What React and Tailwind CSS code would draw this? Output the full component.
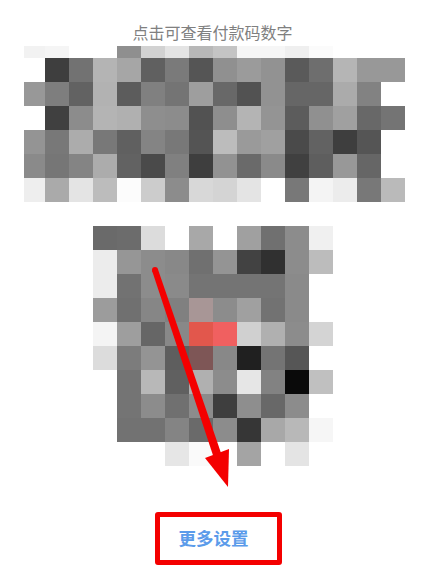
const barcode = [
  ["bg-[#f2f2f2]", "bg-[#f5f5f5]", "bg-white", "bg-white", "bg-[#8f8f8f]", "bg-[#d2d2d2]", "bg-[#e4e4e4]", "bg-[#b8b8b8]", "bg-[#c4c4c4]", "bg-[#f6f6f6]", "bg-[#f6f6f6]", "bg-[#efefef]", "bg-[#fbfbfb]", "bg-white", "bg-white", "bg-white"],
  ["bg-white", "bg-[#3e3e3e]", "bg-[#727272]", "bg-[#b4b4b4]", "bg-[#a6a6a6]", "bg-[#606060]", "bg-[#7a7a7a]", "bg-[#555555]", "bg-[#909090]", "bg-[#9b9b9b]", "bg-[#929292]", "bg-[#5a5a5a]", "bg-[#6e6e6e]", "bg-[#b5b5b5]", "bg-[#989898]", "bg-[#989898]"],
  ["bg-[#989898]", "bg-[#7e7e7e]", "bg-[#626262]", "bg-[#b2b2b2]", "bg-[#5c5c5c]", "bg-[#808080]", "bg-[#747474]", "bg-[#9e9e9e]", "bg-[#686868]", "bg-[#525252]", "bg-[#929292]", "bg-[#666666]", "bg-[#666666]", "bg-[#ababab]", "bg-[#828282]", "bg-white"],
  ["bg-white", "bg-[#404040]", "bg-[#8c8c8c]", "bg-[#b4b4b4]", "bg-[#b0b0b0]", "bg-[#8e8e8e]", "bg-[#8c8c8c]", "bg-[#525252]", "bg-[#8e8e8e]", "bg-[#b4b4b4]", "bg-[#949494]", "bg-[#5c5c5c]", "bg-[#909090]", "bg-[#a0a0a0]", "bg-[#686868]", "bg-[#747474]"],
  ["bg-[#949494]", "bg-[#787878]", "bg-[#acacac]", "bg-[#787878]", "bg-[#606060]", "bg-[#848484]", "bg-[#787878]", "bg-[#545454]", "bg-[#bcbcbc]", "bg-[#9a9a9a]", "bg-[#a0a0a0]", "bg-[#4a4a4a]", "bg-[#626262]", "bg-[#3e3e3e]", "bg-[#555555]", "bg-white"],
  ["bg-[#8a8a8a]", "bg-[#767676]", "bg-[#848484]", "bg-[#acacac]", "bg-[#626262]", "bg-[#4a4a4a]", "bg-[#808080]", "bg-[#3e3e3e]", "bg-[#929292]", "bg-[#6a6a6a]", "bg-[#8a8a8a]", "bg-[#404040]", "bg-[#5e5e5e]", "bg-[#989898]", "bg-[#666666]", "bg-white"],
  ["bg-[#eeeeee]", "bg-[#aaaaaa]", "bg-[#e4e4e4]", "bg-[#bcbcbc]", "bg-[#fcfcfc]", "bg-[#cccccc]", "bg-[#8c8c8c]", "bg-[#d8d8d8]", "bg-[#d4d4d4]", "bg-[#e4e4e4]", "bg-white", "bg-[#787878]", "bg-[#f4f4f4]", "bg-[#ececec]", "bg-[#787878]", "bg-[#bababa]"],
];

const qrcode = [
  ["bg-[#6a6a6a]", "bg-[#6c6c6c]", "bg-[#dcdcdc]", "bg-white", "bg-[#a8a8a8]", "bg-white", "bg-[#a0a0a0]", "bg-[#707070]", "bg-[#8c8c8c]", "bg-[#f0f0f0]"],
  ["bg-[#ececec]", "bg-[#969696]", "bg-[#8c8c8c]", "bg-[#888888]", "bg-[#707070]", "bg-[#949494]", "bg-[#424242]", "bg-[#303030]", "bg-[#8c8c8c]", "bg-[#bcbcbc]"],
  ["bg-[#ececec]", "bg-[#727272]", "bg-[#8c8c8c]", "bg-[#8a8a8a]", "bg-[#747474]", "bg-[#747474]", "bg-[#747474]", "bg-[#747474]", "bg-[#8a8a8a]", "bg-white"],
  ["bg-[#9c9c9c]", "bg-[#707070]", "bg-[#868686]", "bg-[#808080]", "bg-[#a89696]", "bg-[#8c8c8c]", "bg-[#a0a0a0]", "bg-[#727272]", "bg-[#8a8a8a]", "bg-white"],
  ["bg-[#f4f4f4]", "bg-[#9e9e9e]", "bg-[#666666]", "bg-[#888888]", "bg-[#e2574c]", "bg-[#f06060]", "bg-[#d0d0d0]", "bg-[#b0b0b0]", "bg-[#8c8c8c]", "bg-[#d4d4d4]"],
  ["bg-[#dcdcdc]", "bg-[#7c7c7c]", "bg-[#949494]", "bg-[#5e5e5e]", "bg-[#7e5656]", "bg-[#888888]", "bg-[#202020]", "bg-[#747474]", "bg-[#565656]", "bg-white"],
  ["bg-white", "bg-[#747474]", "bg-[#b8b8b8]", "bg-[#606060]", "bg-[#b0b0b0]", "bg-[#8c8c8c]", "bg-[#e6e6e6]", "bg-[#828282]", "bg-[#0a0a0a]", "bg-[#c0c0c0]"],
  ["bg-white", "bg-[#747474]", "bg-[#8c8c8c]", "bg-[#707070]", "bg-[#8c8c8c]", "bg-[#3e3e3e]", "bg-[#8e8e8e]", "bg-[#686868]", "bg-[#8c8c8c]", "bg-white"],
  ["bg-white", "bg-[#727272]", "bg-[#727272]", "bg-[#848484]", "bg-[#6a6a6a]", "bg-[#8c8c8c]", "bg-[#363636]", "bg-[#a8a8a8]", "bg-[#b8b8b8]", "bg-[#f6f6f6]"],
  ["bg-white", "bg-white", "bg-white", "bg-[#e6e6e6]", "bg-[#fafafa]", "bg-white", "bg-[#a4a4a4]", "bg-white", "bg-[#e4e4e4]", "bg-white"],
];

function Mosaic({ rows, className }) {
  return (
    <div className={className}>
      {rows.flat().map((cell, i) => (
        <div key={i} className={cell} />
      ))}
    </div>
  );
}

export default function App() {
  return (
    <div className="relative w-[429px] h-[572px] bg-white overflow-hidden font-['Noto_Sans_CJK_SC',sans-serif]">
      <p className="pt-5 mb-[2px] pr-1 text-center text-base leading-6 text-[#808080]">点击可查看付款码数字</p>

      <Mosaic
        rows={barcode}
        className="ml-6 grid grid-cols-[21px_repeat(15,24px)] grid-rows-[12px_repeat(6,24px)] w-[381px] h-[156px]"
      />

      <Mosaic
        rows={qrcode}
        className="ml-[93px] mt-6 grid grid-cols-[repeat(10,24px)] grid-rows-[repeat(10,24px)] w-[240px] h-[240px]"
      />

      <button className="ml-[155px] mt-[46px] w-[127px] h-[53px] flex items-center justify-center pr-[10px] border-[5px] border-[#f40000] rounded-[3px] text-[17.5px] font-bold text-[#5b9bea]">
        更多设置
      </button>

      {/* arrow drawn over the codes */}
      <svg className="absolute left-0 top-0 pointer-events-none" width="429" height="572" viewBox="0 0 429 572">
        <circle cx="155" cy="270" r="3" fill="#f40000" />
        <polygon points="157.85,269.1 152.15,271 214.3,459.3 222.3,456.7" fill="#f40000" />
        <polygon points="205,458 229,449 228,487" fill="#f40000" />
      </svg>
    </div>
  );
}
